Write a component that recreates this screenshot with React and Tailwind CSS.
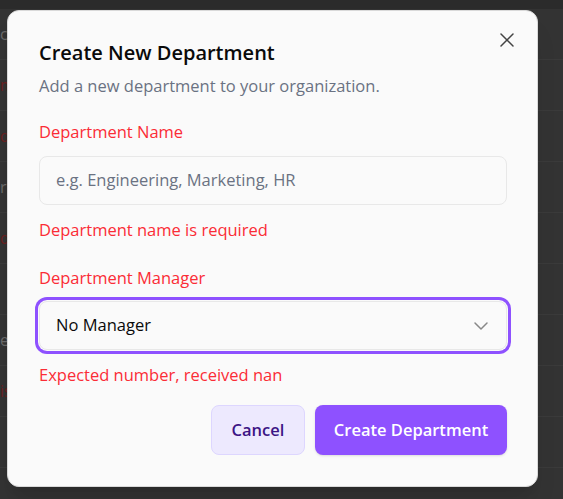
import { X, ChevronDown } from "lucide-react";

const bgRows = [
    { text: "c", red: false },
    { text: "m", red: true },
    { text: "d", red: true },
    { text: "r", red: false },
    { text: "d", red: true },
    { text: "", red: false },
    { text: "e", red: false },
    { text: "is", red: true },
    { text: "", red: false },
];

function Backdrop() {
    return (
        <div className="h-[499px] w-[563px] overflow-hidden bg-[#333333]">
            <div className="h-[9px] bg-[#2b2b2b]" />
            {bgRows.map((row, i) => (
                <div
                    key={i}
                    className="flex h-[51px] items-center border-b border-[#3a3a3a] pl-0 text-[16px]"
                >
                    <span className={row.red ? "text-[#6b1f1f] font-medium" : "text-[#6a6a6a]"}>{row.text}</span>
                </div>
            ))}
        </div>
    );
}

export default function App() {
    return (
        <div className="relative h-[499px] w-[563px] overflow-hidden" style={{ fontFamily: "'Open Sans', 'Noto Sans', sans-serif" }}>
            <Backdrop />

            <div className="absolute inset-0 flex items-start pl-[7px] pt-[10px]">
                <div className="relative flex w-[531px] flex-col rounded-xl border border-[#d9d9d9] bg-[#fafafa] pl-[31px] pr-[30px] pb-[31px] pt-[28px] shadow-xl">
                    <button className="absolute right-[14px] top-[13px] p-1 text-[#444]" aria-label="Close">
                        <X size={24} strokeWidth={1.5} />
                    </button>

                    <h2 className="text-[20px] font-semibold leading-7 text-[#0a0a0a]">Create New Department</h2>
                    <p className="mt-[7px] text-[16.5px] leading-6 text-gray-500">Add a new department to your organization.</p>

                    <label className="mt-[22px] text-[16.5px] font-medium leading-6 text-red-500">Department Name</label>
                    <div className="mt-3 flex h-[49px] items-center rounded-lg border border-[#e8e8e8] bg-[#fafafa] px-4 text-[16.5px] text-gray-500">
                        e.g. Engineering, Marketing, HR
                    </div>
                    <p className="mt-[13px] text-[16.5px] font-medium leading-6 text-red-500">Department name is required</p>

                    <label className="mt-6 text-[16.5px] font-medium leading-6 text-red-500">Department Manager</label>
                    <div className="mt-[11px] flex h-[49px] items-center justify-between rounded-lg border border-[#e8e8e8] bg-[#fafafa] pl-4 pr-[13px] text-[16.5px] text-[#0a0a0a] ring-[3px] ring-violet-500 ring-offset-1 ring-offset-[#fafafa]">
                        <span>No Manager</span>
                        <ChevronDown size={24} strokeWidth={1.5} className="text-[#888]" />
                    </div>
                    <p className="mt-[13px] text-[16.5px] font-medium leading-6 text-red-500">Expected number, received nan</p>

                    <div className="mt-[18px] flex justify-end gap-[10px]">
                        <button className="h-[50px] w-[94px] rounded-lg border border-violet-200 bg-violet-100 text-[16.5px] font-semibold text-[#3c1585]">
                            Cancel
                        </button>
                        <button className="h-[50px] w-[192px] rounded-lg bg-violet-500 text-[16.5px] font-semibold text-white shadow-sm">
                            Create Department
                        </button>
                    </div>
                </div>
            </div>
        </div>
    );
}
